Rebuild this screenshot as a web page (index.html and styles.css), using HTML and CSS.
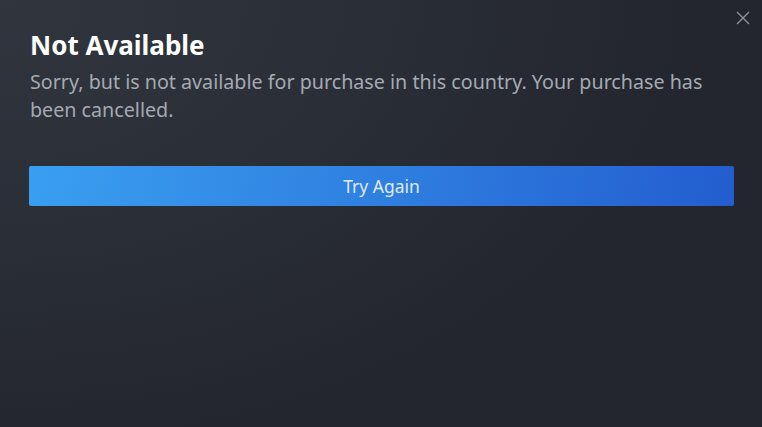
FILE: index.html
```html
<!DOCTYPE html>
<html lang="en">
<head>
  <meta charset="UTF-8">
  <meta name="viewport" content="width=device-width, initial-scale=1.0">
  <title>Not Available</title>
  <link rel="stylesheet" href="styles.css">
</head>
<body>
  <div class="dialog">
    <button class="close" aria-label="Close">
      <svg width="14" height="14" viewBox="0 0 14 14"><path d="M1 1L13 13M13 1L1 13" stroke="currentColor" stroke-width="1.4" fill="none"/></svg>
    </button>
    <h1>Not Available</h1>
    <p class="message">Sorry, but is not available for purchase in this country. Your purchase has been cancelled.</p>
    <button class="primary">Try Again</button>
  </div>
</body>
</html>
```

FILE: styles.css
```css
* {
  box-sizing: border-box;
  margin: 0;
  padding: 0;
}
html, body {
  height: 100%;
}
body {
  font-family: 'Noto Sans', 'Open Sans', sans-serif;
  background: #23262e;
}
.dialog {
  position: relative;
  height: 100%;
  padding: 28px 28px 0 29px;
  background: radial-gradient(ellipse 120% 140% at 0% 0%, #31353e 0%, #2a2e36 40%, #23262e 75%);
}
.close {
  position: absolute;
  top: 11px;
  right: 12px;
  width: 14px;
  height: 14px;
  background: none;
  border: none;
  color: #8b929a;
  cursor: pointer;
  display: flex;
}
h1 {
  font-size: 26px;
  font-weight: 700;
  line-height: 34px;
  color: #ffffff;
  margin-left: 1px;
}
.message {
  font-size: 19.7px;
  line-height: 28px;
  color: #a3aab2;
  margin: 6px 0 0 1px;
  padding-right: 20px;
}
.primary {
  display: block;
  width: 705px;
  height: 40px;
  margin-top: 42px;
  border: none;
  border-radius: 2px;
  background: linear-gradient(100deg, #3a9ff0 0%, #2f7fe0 50%, #235dcf 100%);
  color: #dfeaf7;
  font-family: 'Noto Sans', 'Open Sans', sans-serif;
  font-size: 17.5px;
  cursor: pointer;
}
```
